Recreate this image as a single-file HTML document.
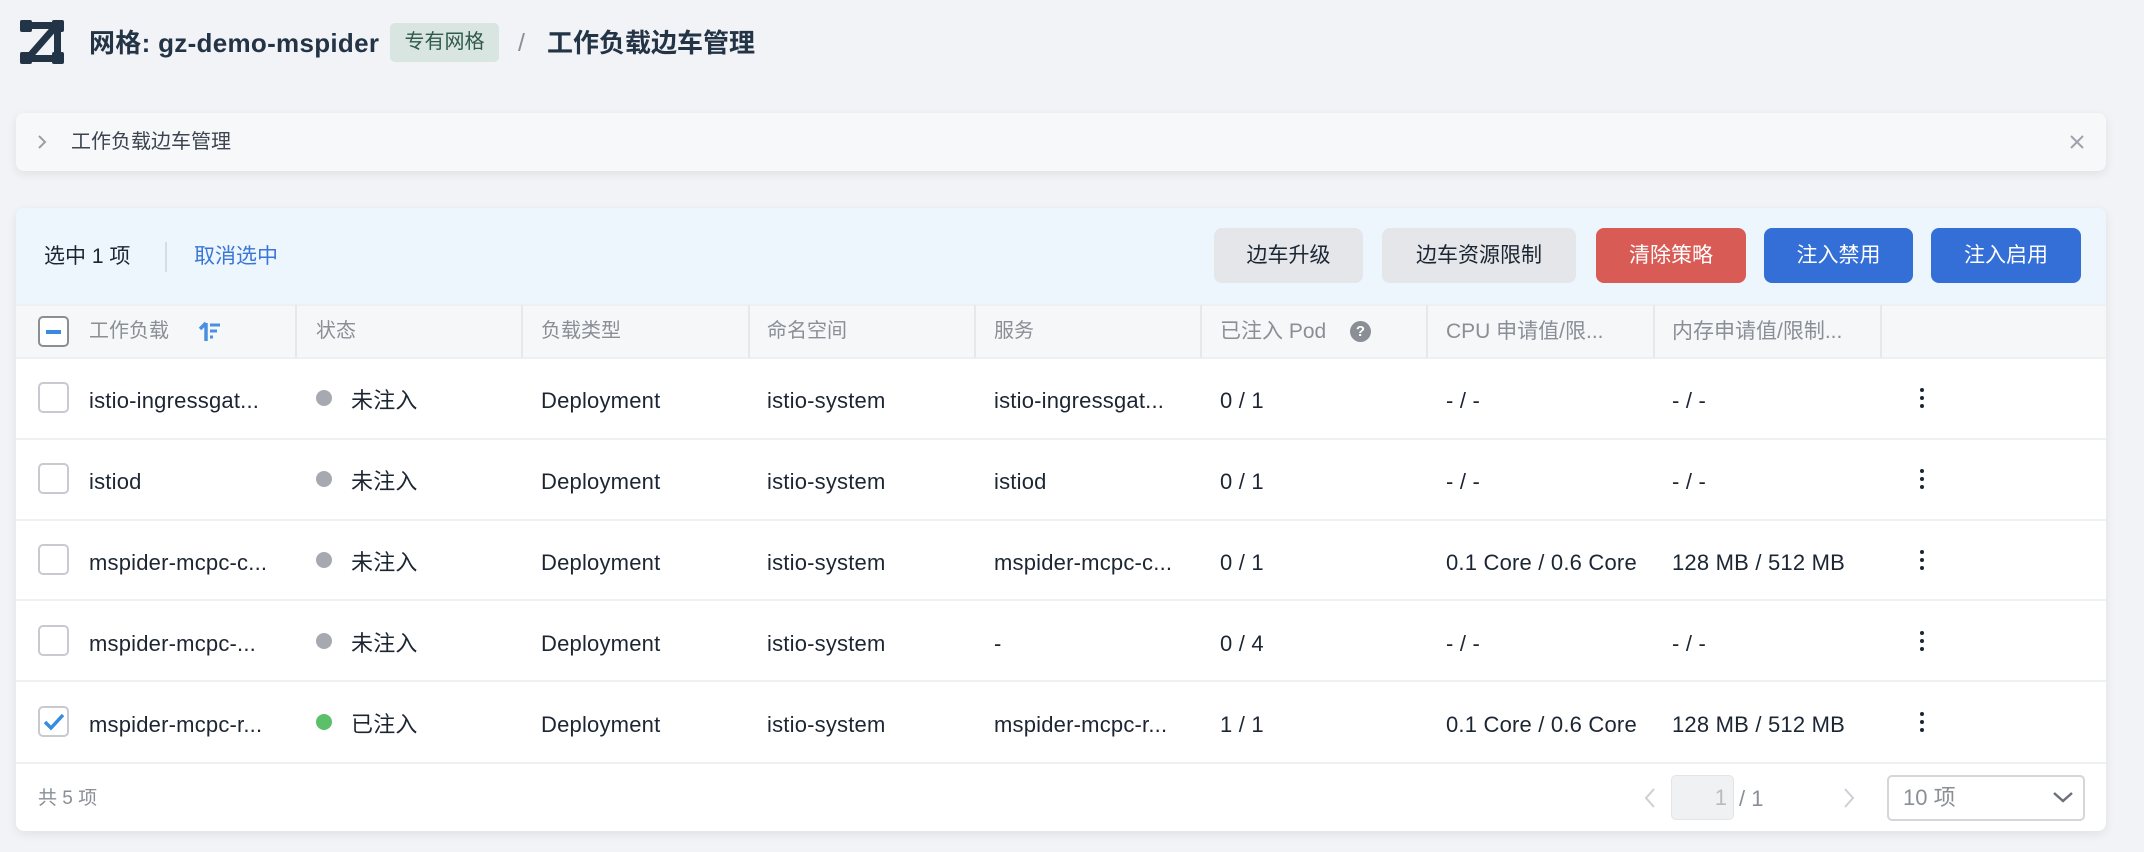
<!DOCTYPE html>
<html><head><meta charset="utf-8"><style>
*{box-sizing:border-box;margin:0;padding:0}
body{width:2144px;height:852px;background:#f2f3f6;font-family:"Liberation Sans","Noto Sans CJK SC",sans-serif;color:#1c2633;position:relative;overflow:hidden}
.a{position:absolute;white-space:nowrap}
.card{position:absolute;left:16px;width:2090px;background:#fff;border-radius:8px;box-shadow:0 3px 10px rgba(0,0,0,.08)}
.btn{position:absolute;top:228px;height:55px;border-radius:8px;font-size:21px;line-height:55px;text-align:center}
.g{background:#e4e6ea;color:#1c2633}
.hd{position:absolute;top:97px;height:53px;line-height:53px;font-size:20px;color:#8a8f96}
.vl{position:absolute;top:97px;width:2px;height:53px;background:#e6e8eb}
.cell{position:absolute;font-size:22px;line-height:30px;letter-spacing:0.2px}
.cb{position:absolute;width:31px;height:31px;border:2px solid #c8cacf;border-radius:5px;background:#fff}
.dot{position:absolute;width:16px;height:16px;border-radius:50%}
.hl{position:absolute;left:0;width:2090px;height:2px;background:#eef0f2}
</style></head><body>
<svg class="a" style="left:20px;top:20px" width="44" height="44" viewBox="0 0 44 44">
<rect x="0" y="0" width="12" height="12" rx="2" fill="#243447"/><rect x="32" y="0" width="12" height="12" rx="2" fill="#243447"/>
<rect x="0" y="32" width="12" height="12" rx="2" fill="#243447"/><rect x="32" y="32" width="12" height="12" rx="2" fill="#243447"/>
<rect x="6" y="2" width="32" height="7" fill="#243447"/><rect x="6" y="35" width="32" height="7" fill="#243447"/>
<path d="M36 6 L8 38" stroke="#243447" stroke-width="7"/><rect x="34" y="6" width="7" height="32" fill="#243447"/>
</svg>
<div class="a" style="left:89px;top:26px;font-size:26px;line-height:34px;font-weight:bold;color:#243447;letter-spacing:0.3px">网格: gz-demo-mspider</div>
<div class="a" style="left:390px;top:23px;width:109px;height:39px;background:#d9e5e1;border-radius:5px;color:#2f5a4c;font-size:20px;line-height:39px;text-align:center">专有网格</div>
<div class="a" style="left:518px;top:26px;font-size:25px;line-height:34px;color:#8a8f96">/</div>
<div class="a" style="left:547px;top:26px;font-size:26px;line-height:34px;font-weight:bold;color:#243447">工作负载边车管理</div>

<div class="card" style="top:113px;height:58px;background:#f7f8fa">
<svg class="a" style="left:20px;top:21px" width="12" height="16"><path d="M3 2 L9 8 L3 14" stroke="#9aa0a6" stroke-width="2" fill="none"/></svg>
<div class="a" style="left:55px;top:14px;font-size:20px;line-height:30px;color:#3c4450">工作负载边车管理</div>
<svg class="a" style="left:2052px;top:20px" width="18" height="18"><path d="M3 3 L15 15 M15 3 L3 15" stroke="#a0a4aa" stroke-width="2"/></svg>
</div>

<div class="card" style="top:208px;height:623px;overflow:hidden">
<div class="a" style="left:0;top:0;width:2090px;height:97px;background:#eef6fd"></div>
<div class="a" style="left:28px;top:34px;font-size:21px;line-height:30px">选中 1 项</div>
<div class="a" style="left:149px;top:34px;width:2px;height:30px;background:#d6dde5"></div>
<div class="a" style="left:178px;top:34px;font-size:21px;line-height:30px;color:#3a76d8">取消选中</div>
<div class="btn g" style="left:1198px;top:20px;width:149px">边车升级</div>
<div class="btn g" style="left:1366px;top:20px;width:194px">边车资源限制</div>
<div class="btn" style="left:1580px;top:20px;width:150px;background:#d95b55;color:#fff">清除策略</div>
<div class="btn" style="left:1748px;top:20px;width:149px;background:#336fd6;color:#fff">注入禁用</div>
<div class="btn" style="left:1915px;top:20px;width:150px;background:#336fd6;color:#fff">注入启用</div>

<div class="a" style="left:0;top:97px;width:2090px;height:53px;background:#f6f7f9"></div>
<div class="hl" style="top:96px"></div><div class="hl" style="top:149px"></div>
<div class="cb" style="left:22px;top:108px;border-color:#8a8f96"></div>
<div class="a" style="left:30px;top:122px;width:15px;height:4px;background:#3a8be0"></div>
<div class="hd" style="left:73px">工作负载</div>
<svg class="a" style="left:182px;top:111px" width="26" height="26" viewBox="0 0 26 26"><path d="M8 4 V22 M2 10 L8 4" stroke="#4a90e2" stroke-width="3.5" fill="none"/><path d="M12 6 H22 M12 12 H19 M12 18 H15" stroke="#4a90e2" stroke-width="3"/></svg>
<div class="vl" style="left:279px"></div><div class="hd" style="left:300px">状态</div>
<div class="vl" style="left:505px"></div><div class="hd" style="left:525px">负载类型</div>
<div class="vl" style="left:732px"></div><div class="hd" style="left:751px">命名空间</div>
<div class="vl" style="left:958px"></div><div class="hd" style="left:978px">服务</div>
<div class="vl" style="left:1184px"></div><div class="hd" style="left:1204px;font-size:21px">已注入 Pod</div>
<div class="a" style="left:1334px;top:113px;width:21px;height:21px;border-radius:50%;background:#8a8f96;color:#fff;font-size:15px;line-height:21px;text-align:center;font-weight:bold">?</div>
<div class="vl" style="left:1410px"></div><div class="hd" style="left:1430px;font-size:21px">CPU 申请值/限...</div>
<div class="vl" style="left:1637px"></div><div class="hd" style="left:1656px;font-size:21px">内存申请值/限制...</div>
<div class="vl" style="left:1864px"></div>

<div id="rows"></div>
<div class="hl" style="top:230px"></div><div class="hl" style="top:311px"></div><div class="hl" style="top:391px"></div><div class="hl" style="top:472px"></div><div class="hl" style="top:554px"></div>
<div class="a" style="left:22px;top:576px;font-size:19px;line-height:30px;color:#8a8f96">共 5 项</div>
<svg class="a" style="left:1627px;top:579px" width="14" height="22"><path d="M11 2 L3 11 L11 20" stroke="#ccd0d4" stroke-width="2" fill="none"/></svg>
<div class="a" style="left:1655px;top:567px;width:63px;height:45px;background:#f0f1f2;border:1px solid #e2e4e6;border-radius:5px;color:#b8bcc0;font-size:22px;line-height:43px;text-align:right;padding-right:6px">1</div>
<div class="a" style="left:1723px;top:576px;font-size:22px;line-height:30px;color:#8a8f96">/ 1</div>
<svg class="a" style="left:1826px;top:579px" width="14" height="22"><path d="M3 2 L11 11 L3 20" stroke="#ccd0d4" stroke-width="2" fill="none"/></svg>
<div class="a" style="left:1871px;top:567px;width:198px;height:46px;border:2px solid #d4d6da;border-radius:5px;font-size:22px;line-height:42px;color:#8a8f96;padding-left:14px">10 项</div>
<svg class="a" style="left:2036px;top:582px" width="22" height="14"><path d="M2 3 L11 11 L20 3" stroke="#6b7079" stroke-width="2.5" fill="none"/></svg>
</div>

<script>
var d=[["istio-ingressgat...",0,"istio-ingressgat...","0 / 1","- / -","- / -"],["istiod",0,"istiod","0 / 1","- / -","- / -"],["mspider-mcpc-c...",0,"mspider-mcpc-c...","0 / 1","0.1 Core / 0.6 Core","128 MB / 512 MB"],["mspider-mcpc-...",0,"-","0 / 4","- / -","- / -"],["mspider-mcpc-r...",1,"mspider-mcpc-r...","1 / 1","0.1 Core / 0.6 Core","128 MB / 512 MB"]];
var h="";d.forEach(function(r,i){var t=150+i*81,c=t+40;
h+='<div class="cb" style="left:22px;top:'+(c-16)+'px"></div>';
if(r[1])h+='<svg class="a" style="left:26px;top:'+(c-11)+'px" width="24" height="22"><path d="M3 11 L9 17 L21 4" stroke="#3a8be0" stroke-width="3.5" fill="none"/></svg>';
var y=(c-12);
h+='<div class="cell" style="left:73px;top:'+y+'px">'+r[0]+'</div>';
h+='<div class="dot" style="left:300px;top:'+(c-8)+'px;background:'+(r[1]?'#5cc06b':'#a6aab0')+'"></div>';
h+='<div class="cell" style="left:335px;top:'+y+'px">'+(r[1]?'已注入':'未注入')+'</div>';
h+='<div class="cell" style="left:525px;top:'+y+'px">Deployment</div>';
h+='<div class="cell" style="left:751px;top:'+y+'px">istio-system</div>';
h+='<div class="cell" style="left:978px;top:'+y+'px">'+r[2]+'</div>';
h+='<div class="cell" style="left:1204px;top:'+y+'px">'+r[3]+'</div>';
h+='<div class="cell" style="left:1430px;top:'+y+'px">'+r[4]+'</div>';
h+='<div class="cell" style="left:1656px;top:'+y+'px">'+r[5]+'</div>';
for(var k=0;k<3;k++)h+='<div class="a" style="left:1904px;top:'+(c-10+k*8)+'px;width:4px;height:4px;border-radius:2px;background:#1c2633"></div>';
});document.getElementById("rows").outerHTML=h;
</script>
</body></html>
